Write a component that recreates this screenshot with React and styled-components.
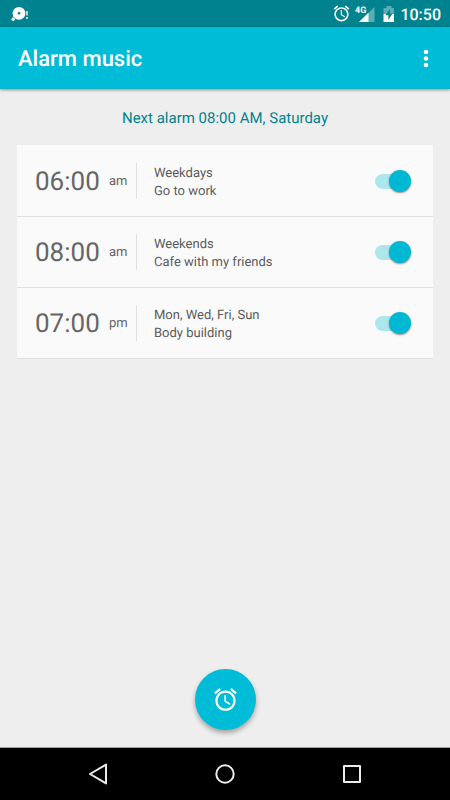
import React, { useState } from "react";
import styled, { createGlobalStyle } from "styled-components";

const GlobalStyle = createGlobalStyle`
  * { box-sizing: border-box; }
  body {
    margin: 0;
    background: #eeeeee;
    font-family: Roboto, "Noto Sans", sans-serif;
    text-rendering: geometricPrecision;
  }
  button { font: inherit; border: 0; padding: 0; background: none; cursor: pointer; }
`;

const Screen = styled.div`
  min-height: 100vh;
  display: flex;
  flex-direction: column;
  background: #eeeeee;
`;

const StatusBar = styled.div`
  height: 27px;
  padding: 0 9px 0 11px;
  display: flex;
  align-items: center;
  background: #00838f;
  color: #ffffff;

  svg { display: block; flex: none; }
`;

const StatusIcons = styled.div`
  margin-left: auto;
  display: flex;
  align-items: center;
`;

const StatusGroup = styled.div`
  display: flex;
  align-items: center;
  gap: ${(p) => p.$gap}px;
`;

const Clock = styled.time`
  margin-left: 5px;
  padding-top: 2px;
  font-size: 16px;
  line-height: 26px;
  font-weight: 500;
`;

const AppBar = styled.header`
  height: 62px;
  padding: 2px 12px 0 18px;
  display: flex;
  align-items: center;
  justify-content: space-between;
  background: #00bcd7;
  border-bottom: 1px solid #1aaec4;
  box-shadow: 0 1px 3px rgba(0, 0, 0, 0.4);
  color: #ffffff;
`;

const Title = styled.h1`
  margin: 0;
  padding-top: 2px;
  font-size: 22px;
  line-height: 28px;
  font-weight: 500;
`;

const MenuButton = styled.button`
  width: 24px;
  height: 36px;
  display: grid;
  place-items: center;
  color: #ffffff;
`;

const Main = styled.main`
  flex: 1;
  padding: 17px;
  display: flex;
  flex-direction: column;
`;

const NextAlarm = styled.p`
  margin: 0 0 15px;
  font-size: 15px;
  line-height: 24px;
  text-align: center;
  color: #00838f;
`;

const AlarmList = styled.ul`
  margin: 0;
  padding: 1px 0 0;
  list-style: none;
  background: #fafafa;
`;

const AlarmRow = styled.li`
  height: 71px;
  padding: 0 22px 0 18px;
  display: flex;
  align-items: center;
  border-bottom: 1px solid #e0e0e0;
`;

const TimeBlock = styled.div`
  height: 36px;
  width: 102px;
  padding-top: 2px;
  display: flex;
  align-items: center;
  border-right: 1px solid #e0e0e0;
`;

const Hour = styled.span`
  width: 74px;
  font-size: 26px;
  line-height: 34px;
  color: #666666;
`;

const Period = styled.span`
  font-size: 13px;
  line-height: 34px;
  color: #666666;
`;

const Details = styled.div`
  flex: 1;
  padding: 3px 0 0 17px;
  font-size: 13px;
  line-height: 18px;
  color: #5c5c5c;
`;

const Toggle = styled.input`
  appearance: none;
  flex: none;
  width: 36px;
  height: 22px;
  margin: 0;
  display: grid;
  align-items: center;
  cursor: pointer;

  &::before,
  &::after {
    content: "";
    grid-area: 1 / 1;
  }

  &::before {
    height: 15px;
    border-radius: 8px;
    background: ${(p) => (p.checked ? "#ade7ee" : "#c4c4c4")};
  }

  &::after {
    width: 22px;
    height: 22px;
    justify-self: ${(p) => (p.checked ? "end" : "start")};
    border-radius: 50%;
    background: ${(p) => (p.checked ? "#00b8d4" : "#f5f5f5")};
    box-shadow: 0 1px 2px rgba(0, 0, 0, 0.45);
  }
`;

const AddButton = styled.button`
  width: 61px;
  height: 61px;
  margin: auto auto 0;
  display: grid;
  place-items: center;
  border-radius: 50%;
  background: #00bcd7;
  color: #ffffff;
  box-shadow: 0 3px 5px rgba(0, 0, 0, 0.32);
`;

const NavBar = styled.nav`
  height: 53px;
  padding: 0 35px;
  display: grid;
  grid-template-columns: repeat(3, 1fr);
  background: #000000;
  border-top: 1px solid #a0a0a0;
`;

const NavButton = styled.button`
  display: grid;
  place-items: center;
  color: #ececec;
`;

function AlarmIcon({ size }) {
  return (
    <svg width={size} height={size} viewBox="0 0 24 24" fill="currentColor" aria-hidden="true">
      <path d="M22 5.72l-4.6-3.86-1.29 1.53 4.6 3.86L22 5.72zM7.88 3.39L6.6 1.86 2 5.71l1.29 1.53 4.59-3.85zM12.5 8H11v6l4.75 2.85.75-1.23-4-2.37V8zM12 4c-4.97 0-9 4.03-9 9s4.02 9 9 9c4.97 0 9-4.03 9-9s-4.03-9-9-9zm0 16c-3.87 0-7-3.13-7-7s3.13-7 7-7 7 3.13 7 7-3.13 7-7 7z" />
    </svg>
  );
}

function DiscIcon() {
  return (
    <svg width="18" height="16" viewBox="0 0 18 16" aria-hidden="true">
      <circle cx="8" cy="7.3" r="6.4" fill="#fff" />
      <circle cx="8" cy="7.3" r="1.3" fill="#00838f" />
      <circle cx="2.2" cy="13.2" r="1.7" fill="#fff" />
      <path d="M1.5 11.5L4 8.5" stroke="#fff" opacity="0.5" />
      <path d="M16 5v4.5M16 11v2" stroke="#fff" strokeWidth="1.8" opacity="0.75" />
    </svg>
  );
}

function SignalIcon() {
  return (
    <svg width="20" height="18" viewBox="0 0 20 18" aria-hidden="true">
      <path d="M19.5 2v15H4z" fill="#fff" opacity="0.35" />
      <path d="M13.5 7.8V17H4z" fill="#fff" />
      <text x="0" y="8" fontSize="9" fontWeight="700" fontFamily="Roboto, sans-serif" fill="#fff">
        4G
      </text>
    </svg>
  );
}

function BatteryIcon() {
  return (
    <svg width="12" height="16" viewBox="0 0 12 16" aria-hidden="true">
      <path d="M3.5 0h5v2H11v6H.5V2h3z" fill="#fff" opacity="0.35" />
      <path d="M.5 8H11v8H.5z" fill="#fff" />
      <path d="M7 3L2.3 9.2h3V14L9.6 7.6H6.8z" fill="#00838f" />
    </svg>
  );
}

const initialAlarms = [
  { id: 1, time: "06:00", period: "am", days: "Weekdays", label: "Go to work", on: true },
  { id: 2, time: "08:00", period: "am", days: "Weekends", label: "Cafe with my friends", on: true },
  { id: 3, time: "07:00", period: "pm", days: "Mon, Wed, Fri, Sun", label: "Body building", on: true },
];

export default function App() {
  const [alarms, setAlarms] = useState(initialAlarms);
  const toggle = (id) =>
    setAlarms((list) => list.map((a) => (a.id === id ? { ...a, on: !a.on } : a)));

  return (
    <Screen>
      <GlobalStyle />
      <StatusBar>
        <DiscIcon />
        <StatusIcons>
          <StatusGroup $gap={8}>
            <StatusGroup $gap={4}>
              <AlarmIcon size={19} />
              <SignalIcon />
            </StatusGroup>
            <BatteryIcon />
          </StatusGroup>
          <Clock>10:50</Clock>
        </StatusIcons>
      </StatusBar>
      <AppBar>
        <Title>Alarm music</Title>
        <MenuButton aria-label="More options">
          <svg width="6" height="20" viewBox="0 0 6 20" fill="currentColor" aria-hidden="true">
            <circle cx="3" cy="3" r="2.3" />
            <circle cx="3" cy="9.5" r="2.3" />
            <circle cx="3" cy="16" r="2.3" />
          </svg>
        </MenuButton>
      </AppBar>
      <Main>
        <NextAlarm>Next alarm 08:00 AM, Saturday</NextAlarm>
        <AlarmList>
          {alarms.map((a) => (
            <AlarmRow key={a.id}>
              <TimeBlock>
                <Hour>{a.time}</Hour>
                <Period>{a.period}</Period>
              </TimeBlock>
              <Details id={`alarm-${a.id}`}>
                <div>{a.days}</div>
                <div>{a.label}</div>
              </Details>
              <Toggle
                type="checkbox"
                role="switch"
                aria-labelledby={`alarm-${a.id}`}
                checked={a.on}
                onChange={() => toggle(a.id)}
              />
            </AlarmRow>
          ))}
        </AlarmList>
        <AddButton aria-label="Add alarm">
          <AlarmIcon size={27} />
        </AddButton>
      </Main>
      <NavBar>
        <NavButton aria-label="Back">
          <svg width="20" height="22" viewBox="0 0 20 22" fill="none" stroke="currentColor" strokeWidth="2" strokeLinejoin="round" aria-hidden="true">
            <path d="M18 1.6v18.8L2 11z" />
          </svg>
        </NavButton>
        <NavButton aria-label="Home">
          <svg width="20" height="20" viewBox="0 0 20 20" fill="none" stroke="currentColor" strokeWidth="2" aria-hidden="true">
            <circle cx="10" cy="10" r="8.7" />
          </svg>
        </NavButton>
        <NavButton aria-label="Recent apps">
          <svg width="18" height="18" viewBox="0 0 18 18" fill="none" stroke="currentColor" strokeWidth="2" strokeLinejoin="round" aria-hidden="true">
            <path d="M1 1h16v16H1z" />
          </svg>
        </NavButton>
      </NavBar>
    </Screen>
  );
}
